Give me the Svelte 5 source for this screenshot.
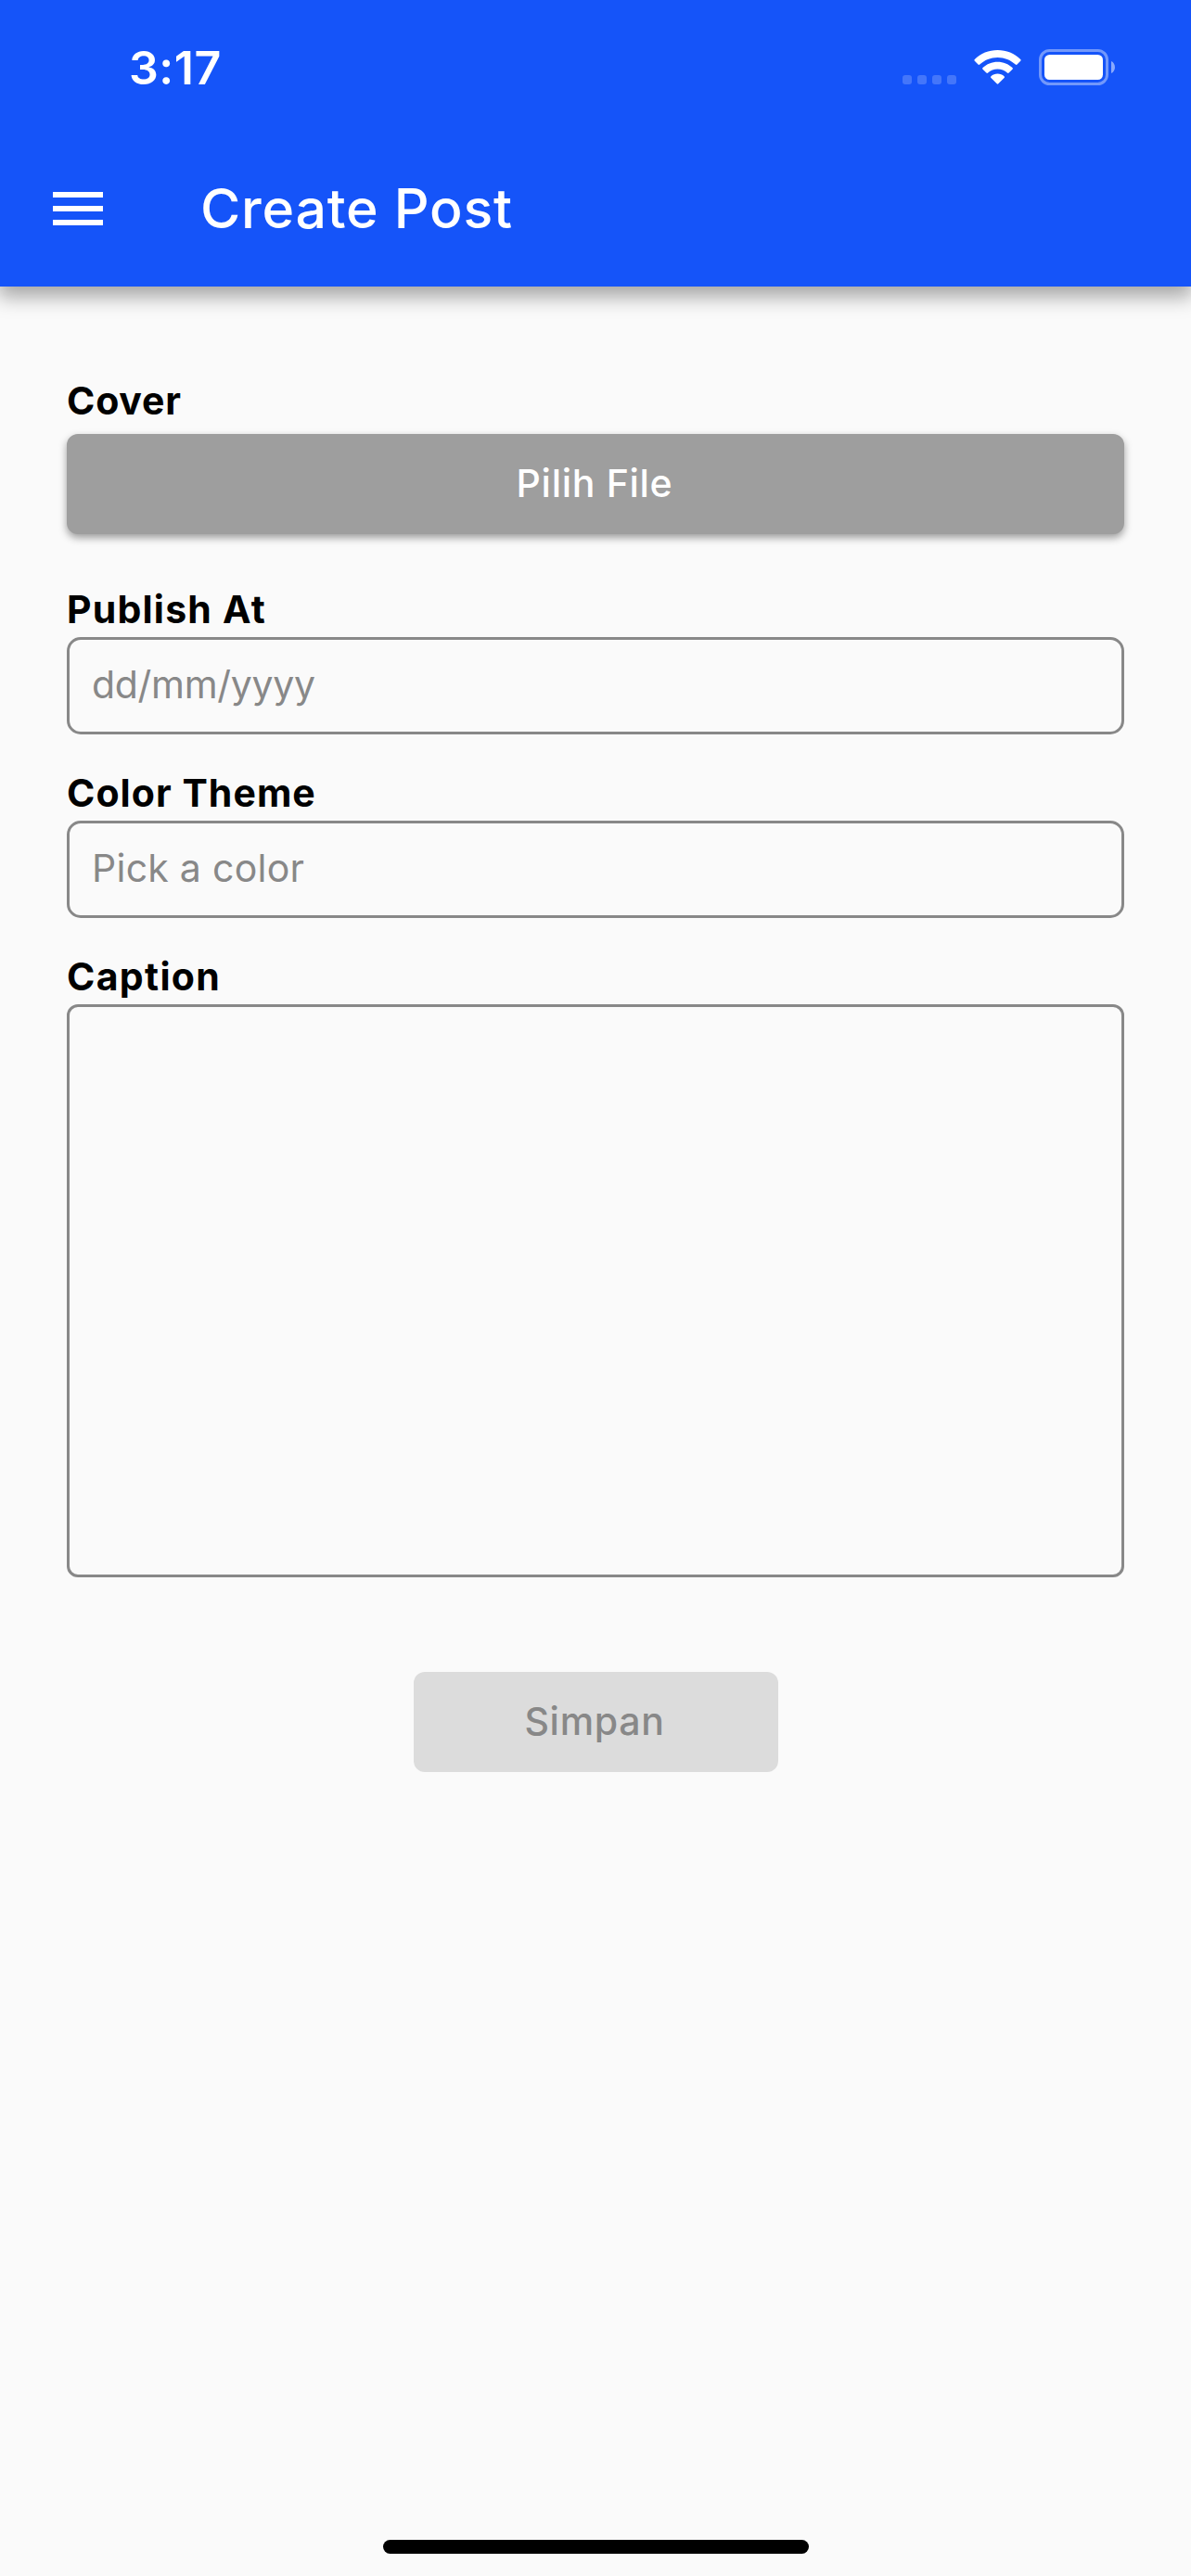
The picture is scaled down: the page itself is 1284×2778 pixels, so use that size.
<script>
  let publishAt = $state('');
  let colorTheme = $state('');
  let caption = $state('');
</script>

<div class="screen">
  <header>
    <div class="status">
      <span class="time">3:17</span>
      <div class="indicators">
        <svg class="cellular" width="58" height="10" viewBox="0 0 58 10">
          <rect x="0" width="10" height="10" rx="3" />
          <rect x="16" width="10" height="10" rx="3" />
          <rect x="32" width="10" height="10" rx="3" />
          <rect x="48" width="10" height="10" rx="3" />
        </svg>
        <svg class="wifi" width="51" height="38" viewBox="0 0 51 38">
          <path d="M25.500 0.000C35.000 0.000 43.800 3.700 50.200 9.900Q51.100 10.800 50.200 11.700L46.500 15.500Q45.700 16.300 44.800 15.500C39.700 10.700 32.900 7.900 25.500 7.900C18.100 7.900 11.300 10.700 6.200 15.500Q5.300 16.300 4.500 15.500L0.800 11.700Q-0.100 10.800 0.800 9.900C7.200 3.700 16.000 0.000 25.500 0.000Z" />
          <path d="M25.500 12.700C31.700 12.700 37.300 15.100 41.500 19.000Q42.400 19.900 41.500 20.800L37.600 24.600Q36.800 25.400 35.900 24.600C33.100 22.100 29.500 20.600 25.500 20.600C21.500 20.600 17.900 22.100 15.100 24.600Q14.200 25.400 13.400 24.600L9.500 20.800Q8.600 19.900 9.500 19.000C13.700 15.100 19.300 12.700 25.500 12.700Z" />
          <path d="M25.500 25.600C28.200 25.600 30.700 26.600 32.600 28.200Q33.500 29.100 32.600 30.000L26.300 36.300Q25.500 37.100 24.700 36.300L18.400 30.000Q17.500 29.100 18.400 28.200C20.300 26.600 22.800 25.600 25.500 25.600Z" />
        </svg>
        <svg class="battery" width="82" height="39" viewBox="0 0 82 39">
          <rect class="shell" x="1.500" y="1.500" width="72" height="36" rx="10" />
          <rect x="6" y="6" width="63" height="27" rx="5.500" />
          <path class="cap" d="M78 13C83.300 15.200 83.300 23.800 78 26Z" />
        </svg>
      </div>
    </div>
    <div class="toolbar">
      <svg class="menu" width="54" height="36" viewBox="0 0 54 36">
        <path d="M0 0H54V6H0ZM0 15H54V21H0ZM0 30H54V36H0Z" />
      </svg>
      <h1>Create Post</h1>
    </div>
  </header>

  <main>
    <div class="label cover">Cover</div>
    <button class="file">Pilih File</button>

    <label class="label publish" for="publish">Publish At</label>
    <input id="publish" class="date" placeholder="dd/mm/yyyy" bind:value={publishAt} />

    <label class="label theme" for="theme">Color Theme</label>
    <input id="theme" placeholder="Pick a color" bind:value={colorTheme} />

    <label class="label caption" for="caption">Caption</label>
    <textarea id="caption" bind:value={caption}></textarea>

    <button class="save" disabled>Simpan</button>
  </main>

  <footer><div class="home"></div></footer>
</div>

<style>
  :global(body) {
    background: #fafafa;
  }

  .screen {
    display: flex;
    flex-direction: column;
    box-sizing: border-box;
    width: 1284px;
    height: 2778px;
    overflow: hidden;
    background: #fafafa;
    font-family: Inter, sans-serif;
  }

  header {
    flex: none;
    height: 309px;
    background: #1554f9;
    color: #fff;
    box-shadow: 0 9px 20px 2px rgba(0, 0, 0, 0.34);
  }

  header svg {
    display: block;
    flex: none;
    fill: #fff;
  }

  .status {
    display: flex;
    justify-content: space-between;
    align-items: flex-start;
    box-sizing: border-box;
    height: 141px;
    padding: 43px 82px 0 139px;
  }

  .time {
    font-size: 50px;
    font-weight: 600;
    line-height: 60px;
    letter-spacing: 0.5px;
  }

  .indicators {
    display: flex;
    align-items: flex-start;
    padding-top: 10px;
  }

  .cellular {
    margin: 28px 19px 0 0;
    opacity: 0.2;
  }

  .wifi {
    margin: 1px 19px 0 0;
  }

  .shell {
    fill: none;
    stroke: #fff;
    stroke-width: 3;
    opacity: 0.4;
  }

  .cap {
    opacity: 0.5;
  }

  .toolbar {
    display: flex;
    align-items: center;
    height: 168px;
    padding-left: 57px;
  }

  h1 {
    margin: 0 0 0 105px;
    font-size: 59px;
    font-weight: 500;
    line-height: 72px;
    letter-spacing: 0.75px;
  }

  main {
    display: flex;
    flex: 1;
    flex-direction: column;
    padding: 99px 72px 0;
  }

  .label {
    height: 48px;
    color: #000;
    font-size: 41px;
    font-weight: 650;
    line-height: 48px;
  }

  .cover {
    margin-bottom: 12px;
    letter-spacing: 0.8px;
  }

  .publish {
    margin: 57px 0 6px;
    letter-spacing: 1.2px;
  }

  .theme {
    margin: 39px 0 6px;
    letter-spacing: 1.05px;
  }

  .caption {
    margin: 39px 0 6px;
    letter-spacing: 1.35px;
  }

  button {
    box-sizing: border-box;
    height: 108px;
    padding: 0 2px 2px 0;
    border: 0;
    border-radius: 12px;
    font: 500 41px/48px Inter, sans-serif;
    letter-spacing: 0.7px;
  }

  .file {
    background: #9e9e9e;
    color: #fff;
    box-shadow: 0 4px 8px rgba(0, 0, 0, 0.38);
  }

  input,
  textarea {
    box-sizing: border-box;
    width: 100%;
    margin: 0;
    border: 3px solid #888;
    border-radius: 15px;
    background: transparent;
    color: #000;
    font: 400 41px/48px Inter, sans-serif;
    letter-spacing: 0.26px;
    outline: 0;
    resize: none;
  }

  input {
    height: 105px;
    padding: 0 24px 3px;
  }

  .date {
    letter-spacing: -0.3px;
  }

  input::placeholder {
    color: #888;
    opacity: 1;
  }

  textarea {
    height: 618px;
    padding: 24px;
    border-radius: 12px;
  }

  .save {
    align-self: center;
    width: 393px;
    margin-top: 102px;
    background: #dcdcdc;
    color: #888;
  }

  footer {
    display: flex;
    flex: none;
    justify-content: center;
    padding-bottom: 24px;
  }

  .home {
    width: 459px;
    height: 15px;
    border-radius: 8px;
    background: #000;
  }
</style>
